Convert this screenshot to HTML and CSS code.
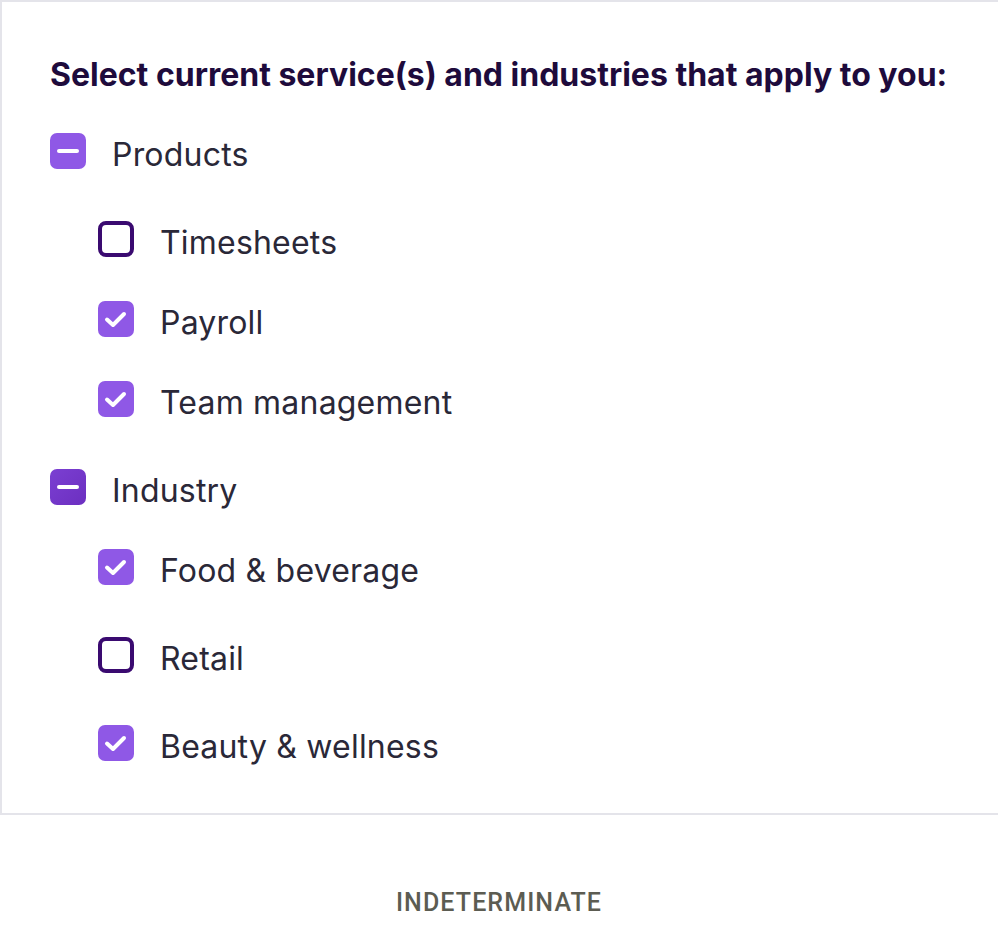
FILE: index.html
```html
<!DOCTYPE html>
<html lang="en">
<head>
    <meta charset="UTF-8">
    <meta name="viewport" content="width=device-width, initial-scale=1.0">
    <title>Checkbox - Indeterminate</title>
    <link rel="stylesheet" href="styles.css">
</head>
<body>
    <div class="frame">
        <h2 class="title">Select current service(s) and industries that apply to you:</h2>

        <div class="group">
            <label class="row">
                <span class="box mixed"><span class="dash"></span></span>
                <span class="text">Products</span>
            </label>
            <label class="row child spaced">
                <span class="box empty"></span>
                <span class="text">Timesheets</span>
            </label>
            <label class="row child">
                <span class="box checked">
                    <svg viewBox="0 0 36 36" width="36" height="36"><polyline points="9,18.5 15,24 26,13" fill="none" stroke="#fff" stroke-width="4" stroke-linecap="round" stroke-linejoin="round"/></svg>
                </span>
                <span class="text">Payroll</span>
            </label>
            <label class="row child">
                <span class="box checked">
                    <svg viewBox="0 0 36 36" width="36" height="36"><polyline points="9,18.5 15,24 26,13" fill="none" stroke="#fff" stroke-width="4" stroke-linecap="round" stroke-linejoin="round"/></svg>
                </span>
                <span class="text">Team management</span>
            </label>
        </div>

        <div class="group">
            <label class="row spaced">
                <span class="box mixed active"><span class="dash"></span></span>
                <span class="text">Industry</span>
            </label>
            <label class="row child">
                <span class="box checked">
                    <svg viewBox="0 0 36 36" width="36" height="36"><polyline points="9,18.5 15,24 26,13" fill="none" stroke="#fff" stroke-width="4" stroke-linecap="round" stroke-linejoin="round"/></svg>
                </span>
                <span class="text">Food &amp; beverage</span>
            </label>
            <label class="row child spaced">
                <span class="box empty"></span>
                <span class="text">Retail</span>
            </label>
            <label class="row child spaced">
                <span class="box checked">
                    <svg viewBox="0 0 36 36" width="36" height="36"><polyline points="9,18.5 15,24 26,13" fill="none" stroke="#fff" stroke-width="4" stroke-linecap="round" stroke-linejoin="round"/></svg>
                </span>
                <span class="text">Beauty &amp; wellness</span>
            </label>
        </div>
    </div>

    <p class="caption">INDETERMINATE</p>
</body>
</html>
```

FILE: styles.css
```css
body {
    margin: 0;
    overflow: hidden;
    background: #fff;
    font-family: Inter, "Noto Sans", sans-serif;
}
.frame {
    box-sizing: border-box;
    width: 1020px;
    height: 815px;
    border: 2px solid #e4e4ea;
    border-right: none;
    padding: 53px 0 0 48px;
}
.title {
    margin: 0 0 38px;
    font-size: 32px;
    line-height: 40px;
    font-weight: 700;
    color: #1e0b3c;
    white-space: nowrap;
}
.group {
    display: flex;
    flex-direction: column;
    gap: 44px;
}
.group + .group {
    margin-top: 44px;
}
.row {
    display: flex;
    align-items: center;
    gap: 26px;
    height: 36px;
    cursor: pointer;
}
.row.spaced {
    margin-top: 8px;
}
.row.child {
    padding-left: 48px;
}
.text {
    font-size: 32px;
    padding-top: 6px;
    letter-spacing: 0.2px;
    color: #2a2838;
}
.box {
    box-sizing: border-box;
    width: 36px;
    height: 36px;
    border-radius: 7px;
    display: flex;
    align-items: center;
    justify-content: center;
    flex-shrink: 0;
}
.box svg {
    display: block;
}
.box.checked,
.box.mixed {
    background: #8f58e6;
}
.box.mixed.active {
    background: linear-gradient(135deg, #7b3fd2, #6c2fc0);
}
.box.empty {
    border: 4px solid #3a0a70;
    border-radius: 8px;
}
.dash {
    width: 22px;
    height: 4px;
    border-radius: 2px;
    background: #fff;
}
.caption {
    margin: 73px 0 0;
    text-align: center;
    font-family: Roboto, sans-serif;
    font-weight: 500;
    font-size: 25px;
    line-height: 30px;
    letter-spacing: 1.1px;
    color: #5c5c52;
}
```
